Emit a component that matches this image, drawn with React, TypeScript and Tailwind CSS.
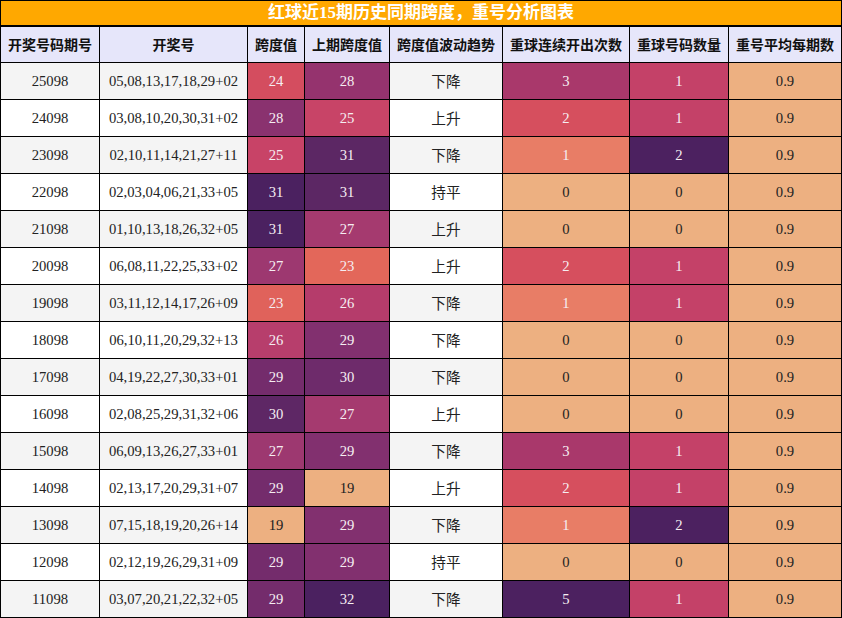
import React from "react"

type Row = {
  issue: string
  nums: string
  span: number
  prevSpan: number
  trend: string
  streak: number
  repeat: number
  avg: string
}

const rows: Row[] = [
  { issue: "25098", nums: "05,08,13,17,18,29+02", span: 24, prevSpan: 28, trend: "下降", streak: 3, repeat: 1, avg: "0.9" },
  { issue: "24098", nums: "03,08,10,20,30,31+02", span: 28, prevSpan: 25, trend: "上升", streak: 2, repeat: 1, avg: "0.9" },
  { issue: "23098", nums: "02,10,11,14,21,27+11", span: 25, prevSpan: 31, trend: "下降", streak: 1, repeat: 2, avg: "0.9" },
  { issue: "22098", nums: "02,03,04,06,21,33+05", span: 31, prevSpan: 31, trend: "持平", streak: 0, repeat: 0, avg: "0.9" },
  { issue: "21098", nums: "01,10,13,18,26,32+05", span: 31, prevSpan: 27, trend: "上升", streak: 0, repeat: 0, avg: "0.9" },
  { issue: "20098", nums: "06,08,11,22,25,33+02", span: 27, prevSpan: 23, trend: "上升", streak: 2, repeat: 1, avg: "0.9" },
  { issue: "19098", nums: "03,11,12,14,17,26+09", span: 23, prevSpan: 26, trend: "下降", streak: 1, repeat: 1, avg: "0.9" },
  { issue: "18098", nums: "06,10,11,20,29,32+13", span: 26, prevSpan: 29, trend: "下降", streak: 0, repeat: 0, avg: "0.9" },
  { issue: "17098", nums: "04,19,22,27,30,33+01", span: 29, prevSpan: 30, trend: "下降", streak: 0, repeat: 0, avg: "0.9" },
  { issue: "16098", nums: "02,08,25,29,31,32+06", span: 30, prevSpan: 27, trend: "上升", streak: 0, repeat: 0, avg: "0.9" },
  { issue: "15098", nums: "06,09,13,26,27,33+01", span: 27, prevSpan: 29, trend: "下降", streak: 3, repeat: 1, avg: "0.9" },
  { issue: "14098", nums: "02,13,17,20,29,31+07", span: 29, prevSpan: 19, trend: "上升", streak: 2, repeat: 1, avg: "0.9" },
  { issue: "13098", nums: "07,15,18,19,20,26+14", span: 19, prevSpan: 29, trend: "下降", streak: 1, repeat: 2, avg: "0.9" },
  { issue: "12098", nums: "02,12,19,26,29,31+09", span: 29, prevSpan: 29, trend: "持平", streak: 0, repeat: 0, avg: "0.9" },
  { issue: "11098", nums: "03,07,20,21,22,32+05", span: 29, prevSpan: 32, trend: "下降", streak: 5, repeat: 1, avg: "0.9" },
]

const PEACH = "#edb081"

// 跨度值 (19..31)
const spanColors: Record<number, string> = {
  19: PEACH, 23: "#e0625b", 24: "#d44d5f", 25: "#c84367", 26: "#b73e6c",
  27: "#9d3870", 28: "#8a326f", 29: "#742c6c", 30: "#5e2765", 31: "#4b2160",
}
// 上期跨度值 (19..32)
const prevColors: Record<number, string> = {
  19: PEACH, 23: "#e3675a", 25: "#c84467", 26: "#b53c6b", 27: "#a53a6f",
  28: "#95336e", 29: "#82306f", 30: "#6e2b6b", 31: "#5c2764", 32: "#4b2160",
}
const streakColors: Record<number, string> = {
  0: PEACH, 1: "#e87d66", 2: "#d64f5e", 3: "#a9386b", 5: "#4c2160",
}
const repeatColors: Record<number, string> = {
  0: PEACH, 1: "#c44168", 2: "#4c2160",
}

const headers = ["开奖号码期号", "开奖号", "跨度值", "上期跨度值", "跨度值波动趋势", "重球连续开出次数", "重球号码数量", "重号平均每期数"]

function HeatCell({ value, color }: { value: number | string; color: string }) {
  const light = color === PEACH
  return (
    <div
      className={`flex items-center justify-center ${light ? "text-[#222]" : "text-[#f6eef2]"}`}
      style={{ backgroundColor: color }}
    >
      {value}
    </div>
  )
}

export default function App() {
  return (
    <div className="w-[842px] h-[618px] bg-black p-px text-[14.67px] font-['Liberation_Serif','Noto_Sans_CJK_SC',serif]">
      <div className="grid grid-cols-[98px_147px_56px_84px_112px_126px_98px_112px] grid-rows-[25px_35px_repeat(15,36px)] gap-px">
        <div className="col-span-8 flex items-center justify-center bg-[#ffa800] border-b border-black text-[17px] font-bold text-white leading-none pb-px">
          红球近15期历史同期跨度，重号分析图表
        </div>
        {headers.map((h) => (
          <div key={h} className="flex items-center justify-center bg-[#e6e6fa] text-[14px] font-bold text-[#111] font-['Noto_Sans_CJK_SC',sans-serif]">
            {h}
          </div>
        ))}
        {rows.map((r, i) => {
          const bg = i % 2 === 0 ? "bg-[#f4f4f4]" : "bg-white"
          return (
            <React.Fragment key={r.issue}>
              <div className={`flex items-center justify-center text-[#222] ${bg}`}>{r.issue}</div>
              <div className={`flex items-center justify-center text-[#222] ${bg}`}>{r.nums}</div>
              <HeatCell value={r.span} color={spanColors[r.span]} />
              <HeatCell value={r.prevSpan} color={prevColors[r.prevSpan]} />
              <div className={`flex items-center justify-center text-[#222] font-['Noto_Sans_CJK_SC',sans-serif] ${bg}`}>{r.trend}</div>
              <HeatCell value={r.streak} color={streakColors[r.streak]} />
              <HeatCell value={r.repeat} color={repeatColors[r.repeat]} />
              <HeatCell value={r.avg} color={PEACH} />
            </React.Fragment>
          )
        })}
      </div>
    </div>
  )
}
